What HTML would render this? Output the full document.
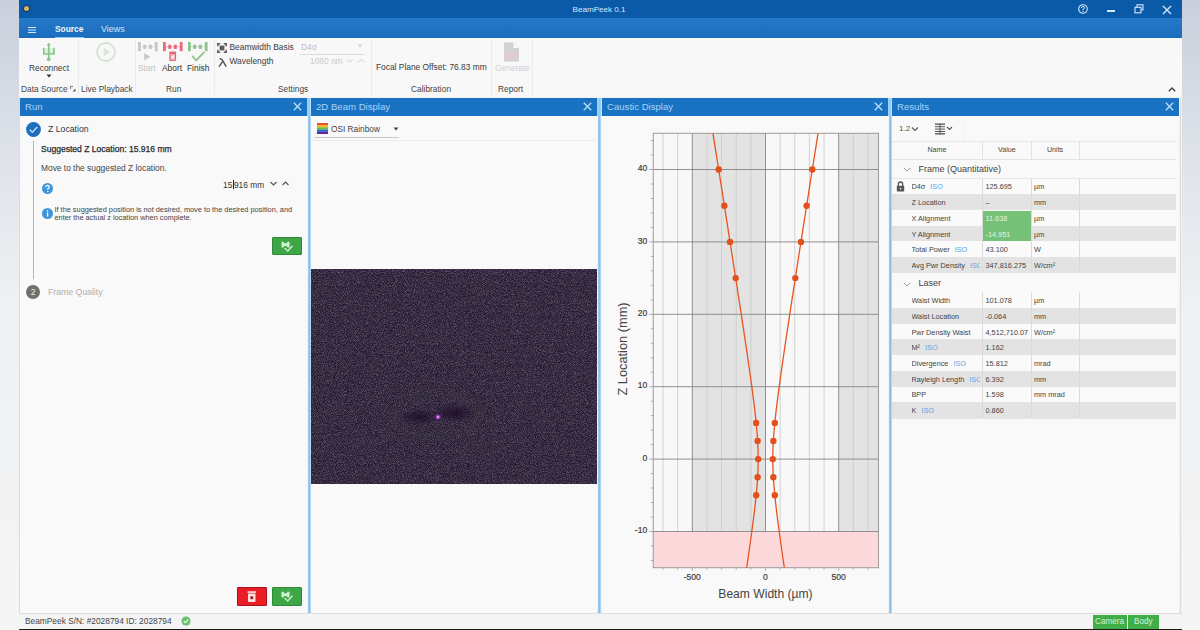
<!DOCTYPE html>
<html><head><meta charset="utf-8">
<style>
*{margin:0;padding:0;box-sizing:border-box}
html,body{width:1200px;height:630px;overflow:hidden}
body{position:relative;font-family:"Liberation Sans",sans-serif;background:linear-gradient(#c9d0dc 0%,#e3e6ec 30%,#eef0f2 48%,#f5f5f5 100%);color:#333}
.a{position:absolute}
.t{position:absolute;white-space:nowrap;line-height:1}
.rl{font-size:8.4px;color:#444}
.sep{position:absolute;top:40px;width:1px;height:55px;background:#ebebeb}
.ph{position:absolute;top:98px;height:18px;background:#1a72c3}
.ph .ttl{position:absolute;left:5px;top:4.2px;line-height:1;font-size:9.6px;color:#a9d3f7;white-space:nowrap}
.ph svg{position:absolute;right:5px;top:4px}
.pb{position:absolute;top:116px;height:497px;background:#f9f9f9}
.split{position:absolute;top:98px;width:3px;height:515px;background:linear-gradient(90deg,#a4cdef,#86bce6 60%,#cfe9fa)}
</style></head><body>
<!-- app frame -->
<div class="a" style="left:19px;top:0;width:1163px;height:630px;background:#f7f7f7"></div>
<!-- title bar -->
<div class="a" style="left:19px;top:0;width:1163px;height:18px;background:#0b5aa8"></div>
<div class="a" style="left:23.5px;top:6.4px;width:5px;height:5px;border-radius:50%;background:#d8b45a;box-shadow:0 0 0 1px #1e2e78"></div>
<div class="t" style="left:572.5px;top:6px;font-size:8.1px;color:#d4e8fb">BeamPeek 0.1</div>
<!-- title buttons -->
<svg class="a" style="left:1076px;top:3px" width="14" height="12" viewBox="0 0 14 12"><circle cx="7" cy="6" r="4.3" fill="none" stroke="#d4e8fb" stroke-width="1.1"/><path d="M5.4 4.9 Q5.5 3.5 7 3.5 Q8.6 3.5 8.5 4.9 Q8.4 5.8 7.1 6.3 L7.1 7.2" fill="none" stroke="#d4e8fb" stroke-width="1"/><circle cx="7.1" cy="8.4" r="0.6" fill="#d4e8fb"/></svg>
<div class="a" style="left:1107px;top:10px;width:8px;height:1.6px;background:#d4e8fb"></div>
<svg class="a" style="left:1134px;top:4px" width="10" height="10" viewBox="0 0 10 10"><rect x="3" y="0.8" width="6" height="5" fill="none" stroke="#d4e8fb" stroke-width="1.1"/><rect x="1" y="3.3" width="6" height="5.5" fill="#0b5aa8" stroke="#d4e8fb" stroke-width="1.1"/></svg>
<svg class="a" style="left:1162px;top:4.5px" width="10" height="10" viewBox="0 0 10 10"><path d="M1 1 L9 9 M9 1 L1 9" stroke="#d4e8fb" stroke-width="1.4"/></svg>
<!-- tab bar -->
<div class="a" style="left:19px;top:18px;width:1163px;height:20px;background:linear-gradient(#2479c9,#1b6dbc)"></div>
<div class="a" style="left:28px;top:27px;width:8px;height:1.2px;background:#d4e8fb;box-shadow:0 2.5px 0 #d4e8fb,0 5px 0 #d4e8fb"></div>
<div class="t" style="left:55px;top:25px;font-size:8.4px;font-weight:bold;color:#eef6fd">Source</div>
<div class="a" style="left:55px;top:36.8px;width:29px;height:1.2px;background:#8fc8f2"></div>
<div class="t" style="left:101px;top:25px;font-size:9px;color:#cfe6fb">Views</div>
<!-- ribbon -->
<div class="a" style="left:19px;top:38px;width:1163px;height:59px;background:#f8f8f8"></div>
<div class="sep" style="left:78px"></div>
<div class="sep" style="left:135px"></div>
<div class="sep" style="left:214px"></div>
<div class="sep" style="left:371px"></div>
<div class="sep" style="left:491px"></div>
<div class="sep" style="left:532px"></div>

<!-- ribbon content -->
<svg class="a" style="left:42px;top:42px" width="15" height="20" viewBox="0 0 15 20">
 <rect x="1.8" y="6" width="10.2" height="6" fill="#dcf3dc"/>
 <g fill="none" stroke="#8ac38e" stroke-width="1.7">
  <path d="M6.7 2.5 V16"/>
  <path d="M1.8 5.8 V12 H12 V5.8"/>
 </g>
 <path d="M6.7 0.6 L8.9 3.4 H4.5 Z" fill="#8ac38e"/>
 <circle cx="6.7" cy="17.3" r="1.9" fill="#8ac38e"/>
</svg>
<div class="t rl" style="left:29px;top:64px;color:#3a3a3a">Reconnect</div>
<svg class="a" style="left:46px;top:74px" width="6" height="4" viewBox="0 0 6 4"><path d="M0.5 0.5 H5.5 L3 3.5Z" fill="#333"/></svg>
<div class="t rl" style="left:21px;top:85px">Data Source</div>
<svg class="a" style="left:70px;top:86px" width="6" height="6" viewBox="0 0 6 6"><path d="M0.5 0.5 H3 M0.5 0.5 V3" stroke="#666" stroke-width="0.9" fill="none"/><path d="M5.5 5.5 H2.5 L5.5 2.5Z" fill="#555"/></svg>

<svg class="a" style="left:95px;top:41px" width="22" height="22" viewBox="0 0 22 22"><circle cx="11" cy="11" r="9" fill="none" stroke="#d5e3d5" stroke-width="1.9"/><path d="M8.8 6.8 L15 11 L8.8 15.2Z" fill="#dbe5db"/></svg>
<div class="t rl" style="left:81px;top:85px">Live Playback</div>

<svg class="a" style="left:138px;top:42.3px" width="22" height="21" viewBox="0 0 22 21"><g fill="#c6c6c6"><rect x="0" y="0" width="2.8" height="9.2"/><rect x="16.8" y="0" width="2.8" height="9.2"/><rect x="5.3" y="2.7" width="2.9" height="4.2"/><rect x="10.9" y="2.7" width="2.9" height="4.2"/></g><path d="M2.8 4.8 H16.8" stroke="#c6c6c6" stroke-width="0.9" opacity="0.55"/><path d="M6.1 10.9 L12.4 14.65 L6.1 18.4Z" fill="#c8c8c8"/></svg>
<div class="t rl" style="left:138px;top:64px;color:#c4c4c4">Start</div>
<svg class="a" style="left:162.9px;top:42.3px" width="22" height="21" viewBox="0 0 22 21"><g fill="#e66a7a"><rect x="0" y="0" width="2.8" height="9.2"/><rect x="16.8" y="0" width="2.8" height="9.2"/><rect x="5.3" y="2.7" width="2.9" height="4.2"/><rect x="10.9" y="2.7" width="2.9" height="4.2"/></g><path d="M2.8 4.8 H16.8" stroke="#e66a7a" stroke-width="0.9" opacity="0.55"/>
 <rect x="6.3" y="9.5" width="6.8" height="9.6" rx="1" fill="#e46a7a"/><rect x="7.6" y="12.2" width="4.2" height="5.6" fill="#f6c2ca"/><rect x="8.8" y="14" width="1.8" height="1.8" fill="#fff"/>
</svg>
<div class="t rl" style="left:162px;top:64px;color:#333">Abort</div>
<svg class="a" style="left:188px;top:42.3px" width="22" height="21" viewBox="0 0 22 21"><g fill="#8cc48d"><rect x="0" y="0" width="2.8" height="9.2"/><rect x="16.8" y="0" width="2.8" height="9.2"/><rect x="5.3" y="2.7" width="2.9" height="4.2"/><rect x="10.9" y="2.7" width="2.9" height="4.2"/></g><path d="M2.8 4.8 H16.8" stroke="#8cc48d" stroke-width="0.9" opacity="0.55"/><path d="M4 13.7 L8.2 18.4 L16.4 9.9" fill="none" stroke="#8cc48d" stroke-width="1.7"/></svg>
<div class="t rl" style="left:187px;top:64px;color:#333">Finish</div>
<div class="t rl" style="left:166px;top:85px">Run</div>

<svg class="a" style="left:217.3px;top:42.7px" width="10" height="10" viewBox="0 0 10 10">
 <g fill="none" stroke="#5a5a5a" stroke-width="1.5"><path d="M0.8 3.2 V0.8 H3.2 M6.8 0.8 H9.2 V3.2 M9.2 6.8 V9.2 H6.8 M3.2 9.2 H0.8 V6.8"/></g>
 <rect x="2.6" y="2.6" width="4.8" height="4.8" fill="#5a5a5a"/>
</svg>
<div class="t rl" style="left:229.5px;top:43px;color:#3a3a3a">Beamwidth Basis</div>
<div class="t rl" style="left:301px;top:43px;color:#bdbdbd">D4σ</div>
<div class="a" style="left:300px;top:53.5px;width:64px;height:1px;background:#dcdcdc"></div>
<svg class="a" style="left:357px;top:44px" width="6" height="4" viewBox="0 0 6 4"><path d="M0.5 0.5 H5.5 L3 3.5Z" fill="#cfcfcf"/></svg>
<svg class="a" style="left:218px;top:57.5px" width="9" height="9" viewBox="0 0 9 9"><path d="M1.6 0.8 Q4 0.6 5 3 L8.2 8.6 M4.6 3.6 L1 8.6" fill="none" stroke="#555" stroke-width="1.5"/></svg>
<div class="t rl" style="left:229.5px;top:57px;color:#3a3a3a">Wavelength</div>
<div class="t rl" style="left:310px;top:57px;color:#c8c8c8">1080 nm</div>
<svg class="a" style="left:346px;top:58px" width="20" height="6" viewBox="0 0 20 6"><path d="M1 1.5 L3.8 4.3 L6.6 1.5 M12.5 4.3 L15.3 1.5 L18.1 4.3" fill="none" stroke="#d0d0d0" stroke-width="1"/></svg>
<div class="t rl" style="left:278px;top:85px">Settings</div>

<div class="t rl" style="left:376px;top:63px;color:#3a3a3a">Focal Plane Offset: 76.83 mm</div>
<div class="t rl" style="left:411px;top:85px">Calibration</div>

<svg class="a" style="left:503px;top:42px" width="17" height="20" viewBox="0 0 17 20">
 <path d="M1 0.5 H10.5 L16 6 V19.5 H1Z" fill="#d2d2d2"/>
 <path d="M10.5 0.8 V6 H15.7Z" fill="#fafafa"/>
 <rect x="3" y="10" width="10" height="7" fill="#e3cbd0" opacity="0.8"/>
</svg>
<div class="t rl" style="left:495px;top:64px;color:#d0d0d0">Generate</div>
<div class="t rl" style="left:498px;top:85px">Report</div>
<svg class="a" style="left:1168px;top:87px" width="8" height="5" viewBox="0 0 8 5"><path d="M0.8 4.2 L4 1 L7.2 4.2" fill="none" stroke="#444" stroke-width="1.4"/></svg>

<!-- panel area -->
<div class="a" style="left:19px;top:97px;width:1163px;height:517px;background:#f2f2f2"></div>
<div class="a" style="left:19px;top:97px;width:1px;height:517px;background:#dcdcdc"></div>
<div class="a" style="left:1180px;top:97px;width:1px;height:517px;background:#dcdcdc"></div>
<div class="a" style="left:19px;top:612px;width:1163px;height:2px;background:#dedede"></div>
<div class="ph" style="left:20px;width:287px"><div class="ttl">Run</div><svg width="9" height="9" viewBox="0 0 9 9"><path d="M0.8 0.8 L8.2 8.2 M8.2 0.8 L0.8 8.2" stroke="#b3d9f9" stroke-width="1.4"/></svg></div>
<div class="pb" style="left:20px;width:287px"></div>
<div class="a" style="left:307px;top:98px;width:4px;height:18px;background:linear-gradient(90deg,#a6d2f4,#8ccaf2 60%,#cfeafc)"></div><div class="split" style="left:308px;top:116px;width:3px;height:497px"></div>
<div class="ph" style="left:311px;width:286px"><div class="ttl">2D Beam Display</div><svg width="9" height="9" viewBox="0 0 9 9"><path d="M0.8 0.8 L8.2 8.2 M8.2 0.8 L0.8 8.2" stroke="#b3d9f9" stroke-width="1.4"/></svg></div>
<div class="pb" style="left:311px;width:286px"></div>
<div class="a" style="left:597px;top:98px;width:5px;height:18px;background:linear-gradient(90deg,#a6d2f4,#8ccaf2 60%,#cfeafc)"></div><div class="split" style="left:598px;top:116px;width:3.2px;height:497px"></div>
<div class="ph" style="left:602px;width:286px"><div class="ttl">Caustic Display</div><svg width="9" height="9" viewBox="0 0 9 9"><path d="M0.8 0.8 L8.2 8.2 M8.2 0.8 L0.8 8.2" stroke="#b3d9f9" stroke-width="1.4"/></svg></div>
<div class="pb" style="left:602px;width:286px"></div>
<div class="a" style="left:888px;top:98px;width:4px;height:18px;background:linear-gradient(90deg,#a6d2f4,#8ccaf2 60%,#cfeafc)"></div><div class="split" style="left:888.5px;top:116px;width:3.2px;height:497px"></div>
<div class="ph" style="left:892px;width:287px"><div class="ttl">Results</div><svg width="9" height="9" viewBox="0 0 9 9"><path d="M0.8 0.8 L8.2 8.2 M8.2 0.8 L0.8 8.2" stroke="#b3d9f9" stroke-width="1.4"/></svg></div>
<div class="pb" style="left:892px;width:287px"></div>

<!-- Run panel content -->
<svg class="a" style="left:25px;top:121px" width="17" height="17" viewBox="0 0 17 17"><circle cx="8.5" cy="8.5" r="7.4" fill="#1d6fbd"/><path d="M4.8 8.7 L7.4 11.2 L12.2 6" fill="none" stroke="#b8ddfb" stroke-width="1.5"/></svg>
<div class="t" style="left:48px;top:125px;font-size:8.7px;color:#333">Z Location</div>
<div class="a" style="left:33.2px;top:141px;width:1.3px;height:138px;background:#9dbcd9"></div>
<div class="t" style="left:41px;top:145px;font-size:8.55px;color:#2a2a2a;-webkit-text-stroke:0.25px #2a2a2a">Suggested Z Location: 15.916 mm</div>
<div class="t" style="left:41px;top:164px;font-size:8.4px;color:#444">Move to the suggested Z location.</div>
<svg class="a" style="left:40.5px;top:182px" width="13" height="13" viewBox="0 0 13 13"><circle cx="6.5" cy="6.5" r="5.5" fill="#3d95de"/><path d="M4.7 5.2 Q4.8 3.4 6.5 3.4 Q8.3 3.4 8.3 5 Q8.3 6 6.8 6.7 L6.8 7.7" fill="none" stroke="#fff" stroke-width="1.2"/><circle cx="6.8" cy="9.4" r="0.75" fill="#fff"/></svg>
<div class="t" style="left:223px;top:180px;font-size:8.4px;color:#333">15<span style="display:inline-block;width:1px;height:9px;background:#222;vertical-align:-1px;margin:0 0.3px"></span>916 mm</div>
<svg class="a" style="left:269px;top:180px" width="22" height="7" viewBox="0 0 22 7"><path d="M1.5 2 L4.5 5 L7.5 2 M13.5 5 L16.5 2 L19.5 5" fill="none" stroke="#555" stroke-width="1.1"/></svg>
<svg class="a" style="left:40.5px;top:206.5px" width="13" height="13" viewBox="0 0 13 13"><circle cx="6.5" cy="6.5" r="5.5" fill="#3d95de"/><rect x="5.9" y="5.3" width="1.3" height="4.3" fill="#fff"/><circle cx="6.55" cy="3.7" r="0.8" fill="#fff"/></svg>
<div class="t" style="left:54.5px;top:205.5px;font-size:7.35px;color:#444;line-height:8.3px">If the suggested position is not desired, move to the desired position, and<br>enter the actual z location when complete.</div>
<div class="a" style="left:272px;top:237px;width:30px;height:18px;background:#3fa648;border:1px solid #2f8a37;border-radius:1px"></div>
<svg class="a" style="left:272px;top:236.5px" width="30" height="18" viewBox="0 0 30 18"><path d="M9.5 4.8 H11.3 L12.4 6.3 H14.6 L15.7 4.8 H17.5 V10.5 H15.7 L14.6 9 H12.4 L11.3 10.5 H9.5 Z" fill="#d2f3d2"/><path d="M12.6 11 L15.8 14 L20.5 8.8" fill="none" stroke="#c8efc8" stroke-width="1.5"/></svg>
<svg class="a" style="left:25px;top:284px" width="16" height="16" viewBox="0 0 16 16"><circle cx="8" cy="8" r="7" fill="#6f6f6f"/><text x="8" y="11" font-size="8.5" text-anchor="middle" fill="#eee" font-family="Liberation Sans">2</text></svg>
<div class="t" style="left:48px;top:287.5px;font-size:8.7px;color:#b0b0b0">Frame Quality</div>
<div class="a" style="left:237px;top:587px;width:30px;height:19px;background:#e81d25;border:1px solid #a8121a;border-radius:1px"></div>
<svg class="a" style="left:237px;top:587px" width="30" height="19" viewBox="0 0 30 19"><rect x="10.5" y="4.3" width="8.5" height="1.6" fill="#ffe4e4"/><rect x="11" y="6.6" width="7.5" height="8.4" rx="1" fill="#ffe4e4"/><rect x="13.3" y="9.3" width="2.9" height="2.9" fill="#b01820"/></svg>
<div class="a" style="left:272px;top:587px;width:30px;height:19px;background:#3fa648;border:1px solid #2f8a37;border-radius:1px"></div>
<svg class="a" style="left:272px;top:587px" width="30" height="18" viewBox="0 0 30 18"><path d="M9.5 4.8 H11.3 L12.4 6.3 H14.6 L15.7 4.8 H17.5 V10.5 H15.7 L14.6 9 H12.4 L11.3 10.5 H9.5 Z" fill="#d2f3d2"/><path d="M12.6 11 L15.8 14 L20.5 8.8" fill="none" stroke="#c8efc8" stroke-width="1.5"/></svg>

<!-- status bar -->
<div class="a" style="left:19px;top:614px;width:1163px;height:15px;background:#f4f4f4"></div>
<div class="a" style="left:19px;top:629px;width:1163px;height:1px;background:#1a1a1a"></div>
<div class="t" style="left:25px;top:617px;font-size:8.35px;color:#444">BeamPeek S/N: #2028794 ID: 2028794</div>
<svg class="a" style="left:181px;top:616px" width="10" height="10" viewBox="0 0 10 10"><circle cx="5" cy="5" r="4.6" fill="#6cc06f"/><path d="M2.8 5.1 L4.4 6.6 L7.3 3.5" fill="none" stroke="#e8f7e8" stroke-width="1.2"/></svg>
<div class="a" style="left:1093px;top:615px;width:34px;height:14px;background:#3fae49"></div>
<div class="a" style="left:1128px;top:615px;width:31px;height:14px;background:#3fae49"></div>
<div class="t" style="left:1095px;top:618px;font-size:8.2px;color:#d8f0d8">Camera</div>
<div class="t" style="left:1134px;top:618px;font-size:8.2px;color:#d8f0d8">Body</div>

<!-- 2D beam display -->
<svg class="a" style="left:317px;top:123px" width="11" height="11" viewBox="0 0 11 11"><rect y="0" width="11" height="2.2" fill="#e8542a"/><rect y="2.2" width="11" height="2.2" fill="#f2b418"/><rect y="4.4" width="11" height="2.2" fill="#5cc23c"/><rect y="6.6" width="11" height="2.2" fill="#2a62d6"/><rect y="8.8" width="11" height="2.2" fill="#5a2a9a"/></svg>
<div class="t" style="left:331px;top:125px;font-size:8.3px;color:#444">OSI Rainbow</div>
<svg class="a" style="left:393px;top:127px" width="6" height="4" viewBox="0 0 6 4"><path d="M0.5 0.5 H5.5 L3 3.5Z" fill="#444"/></svg>
<div class="a" style="left:314px;top:137px;width:85px;height:1px;background:#c9c9c9"></div>
<div class="a" style="left:311px;top:140px;width:286px;height:1px;background:#ececec"></div>
<svg class="a" style="left:311px;top:269px" width="286" height="215" viewBox="0 0 286 215">
 <defs>
  <filter id="nz" x="0" y="0" width="100%" height="100%">
   <feTurbulence type="fractalNoise" baseFrequency="1.1" numOctaves="2" seed="7" result="t"/>
   <feColorMatrix type="matrix" values="0 0 0 0 0.31  0 0 0 0 0.28  0 0 0 0 0.31  1.2 0 0 0 -0.45" in="t" result="c"/>
   <feGaussianBlur in="c" stdDeviation="0.45" result="b"/><feComposite in="b" in2="SourceGraphic" operator="in"/>
  </filter>
  <radialGradient id="dk" cx="0.5" cy="0.5" r="0.5"><stop offset="0" stop-color="#1a0826" stop-opacity="0.8"/><stop offset="1" stop-color="#1a0826" stop-opacity="0"/></radialGradient>
  <radialGradient id="sp" cx="0.5" cy="0.5" r="0.5"><stop offset="0" stop-color="#ffd8ff"/><stop offset="0.35" stop-color="#d050e0"/><stop offset="1" stop-color="#7020a0" stop-opacity="0"/></radialGradient>
 </defs>
 <rect width="287" height="215" fill="#261a33"/>
 <rect width="287" height="215" fill="#000" filter="url(#nz)"/>
 <filter id="bl"><feGaussianBlur stdDeviation="3"/></filter><ellipse cx="127" cy="146" rx="42" ry="22" fill="none" stroke="#3c4438" stroke-width="5" opacity="0.28" filter="url(#bl)"/><ellipse cx="108" cy="148" rx="20" ry="9" fill="url(#dk)"/>
 <ellipse cx="143" cy="144" rx="22" ry="10" fill="url(#dk)"/>
 <circle cx="127" cy="148" r="3.4" fill="url(#sp)"/>
</svg>

<!-- caustic -->
<svg class="a" style="left:0;top:0" width="1200" height="630" viewBox="0 0 1200 630" font-family="Liberation Sans"><rect x="653.25" y="133.30" width="225.25" height="434.40" fill="#f8f8f8"/><rect x="692.30" y="133.30" width="73.20" height="398.20" fill="#e3e3e3"/><rect x="838.70" y="133.30" width="39.80" height="398.20" fill="#e3e3e3"/><rect x="653.25" y="531.50" width="225.25" height="36.20" fill="#fdd9dc"/><line x1="663.02" y1="133.30" x2="663.02" y2="531.50" stroke="#cdcdcd" stroke-width="0.9"/><line x1="677.66" y1="133.30" x2="677.66" y2="531.50" stroke="#cdcdcd" stroke-width="0.9"/><line x1="706.94" y1="133.30" x2="706.94" y2="531.50" stroke="#cdcdcd" stroke-width="0.9"/><line x1="721.58" y1="133.30" x2="721.58" y2="531.50" stroke="#cdcdcd" stroke-width="0.9"/><line x1="736.22" y1="133.30" x2="736.22" y2="531.50" stroke="#cdcdcd" stroke-width="0.9"/><line x1="750.86" y1="133.30" x2="750.86" y2="531.50" stroke="#cdcdcd" stroke-width="0.9"/><line x1="780.14" y1="133.30" x2="780.14" y2="531.50" stroke="#cdcdcd" stroke-width="0.9"/><line x1="794.78" y1="133.30" x2="794.78" y2="531.50" stroke="#cdcdcd" stroke-width="0.9"/><line x1="809.42" y1="133.30" x2="809.42" y2="531.50" stroke="#cdcdcd" stroke-width="0.9"/><line x1="824.06" y1="133.30" x2="824.06" y2="531.50" stroke="#cdcdcd" stroke-width="0.9"/><line x1="853.34" y1="133.30" x2="853.34" y2="531.50" stroke="#cdcdcd" stroke-width="0.9"/><line x1="867.98" y1="133.30" x2="867.98" y2="531.50" stroke="#cdcdcd" stroke-width="0.9"/><line x1="692.30" y1="133.30" x2="692.30" y2="531.50" stroke="#858585" stroke-width="0.9"/><line x1="765.50" y1="133.30" x2="765.50" y2="531.50" stroke="#858585" stroke-width="0.9"/><line x1="838.70" y1="133.30" x2="838.70" y2="531.50" stroke="#858585" stroke-width="0.9"/><line x1="653.25" y1="531.50" x2="878.5" y2="531.50" stroke="#858585" stroke-width="0.9"/><line x1="653.25" y1="459.10" x2="878.5" y2="459.10" stroke="#858585" stroke-width="0.9"/><line x1="653.25" y1="386.70" x2="878.5" y2="386.70" stroke="#858585" stroke-width="0.9"/><line x1="653.25" y1="314.30" x2="878.5" y2="314.30" stroke="#858585" stroke-width="0.9"/><line x1="653.25" y1="241.90" x2="878.5" y2="241.90" stroke="#858585" stroke-width="0.9"/><line x1="653.25" y1="169.50" x2="878.5" y2="169.50" stroke="#858585" stroke-width="0.9"/><rect x="653.25" y="133.30" width="225.25" height="434.40" fill="none" stroke="#9a9a9a" stroke-width="1"/><line x1="650.75" y1="560.46" x2="653.25" y2="560.46" stroke="#9a9a9a" stroke-width="0.8"/><line x1="650.75" y1="545.98" x2="653.25" y2="545.98" stroke="#9a9a9a" stroke-width="0.8"/><line x1="649.25" y1="531.50" x2="653.25" y2="531.50" stroke="#9a9a9a" stroke-width="0.8"/><line x1="650.75" y1="517.02" x2="653.25" y2="517.02" stroke="#9a9a9a" stroke-width="0.8"/><line x1="650.75" y1="502.54" x2="653.25" y2="502.54" stroke="#9a9a9a" stroke-width="0.8"/><line x1="650.75" y1="488.06" x2="653.25" y2="488.06" stroke="#9a9a9a" stroke-width="0.8"/><line x1="650.75" y1="473.58" x2="653.25" y2="473.58" stroke="#9a9a9a" stroke-width="0.8"/><line x1="649.25" y1="459.10" x2="653.25" y2="459.10" stroke="#9a9a9a" stroke-width="0.8"/><line x1="650.75" y1="444.62" x2="653.25" y2="444.62" stroke="#9a9a9a" stroke-width="0.8"/><line x1="650.75" y1="430.14" x2="653.25" y2="430.14" stroke="#9a9a9a" stroke-width="0.8"/><line x1="650.75" y1="415.66" x2="653.25" y2="415.66" stroke="#9a9a9a" stroke-width="0.8"/><line x1="650.75" y1="401.18" x2="653.25" y2="401.18" stroke="#9a9a9a" stroke-width="0.8"/><line x1="649.25" y1="386.70" x2="653.25" y2="386.70" stroke="#9a9a9a" stroke-width="0.8"/><line x1="650.75" y1="372.22" x2="653.25" y2="372.22" stroke="#9a9a9a" stroke-width="0.8"/><line x1="650.75" y1="357.74" x2="653.25" y2="357.74" stroke="#9a9a9a" stroke-width="0.8"/><line x1="650.75" y1="343.26" x2="653.25" y2="343.26" stroke="#9a9a9a" stroke-width="0.8"/><line x1="650.75" y1="328.78" x2="653.25" y2="328.78" stroke="#9a9a9a" stroke-width="0.8"/><line x1="649.25" y1="314.30" x2="653.25" y2="314.30" stroke="#9a9a9a" stroke-width="0.8"/><line x1="650.75" y1="299.82" x2="653.25" y2="299.82" stroke="#9a9a9a" stroke-width="0.8"/><line x1="650.75" y1="285.34" x2="653.25" y2="285.34" stroke="#9a9a9a" stroke-width="0.8"/><line x1="650.75" y1="270.86" x2="653.25" y2="270.86" stroke="#9a9a9a" stroke-width="0.8"/><line x1="650.75" y1="256.38" x2="653.25" y2="256.38" stroke="#9a9a9a" stroke-width="0.8"/><line x1="649.25" y1="241.90" x2="653.25" y2="241.90" stroke="#9a9a9a" stroke-width="0.8"/><line x1="650.75" y1="227.42" x2="653.25" y2="227.42" stroke="#9a9a9a" stroke-width="0.8"/><line x1="650.75" y1="212.94" x2="653.25" y2="212.94" stroke="#9a9a9a" stroke-width="0.8"/><line x1="650.75" y1="198.46" x2="653.25" y2="198.46" stroke="#9a9a9a" stroke-width="0.8"/><line x1="650.75" y1="183.98" x2="653.25" y2="183.98" stroke="#9a9a9a" stroke-width="0.8"/><line x1="649.25" y1="169.50" x2="653.25" y2="169.50" stroke="#9a9a9a" stroke-width="0.8"/><line x1="650.75" y1="155.02" x2="653.25" y2="155.02" stroke="#9a9a9a" stroke-width="0.8"/><line x1="650.75" y1="140.54" x2="653.25" y2="140.54" stroke="#9a9a9a" stroke-width="0.8"/><line x1="663.02" y1="567.70" x2="663.02" y2="569.70" stroke="#9a9a9a" stroke-width="0.8"/><line x1="677.66" y1="567.70" x2="677.66" y2="569.70" stroke="#9a9a9a" stroke-width="0.8"/><line x1="692.30" y1="567.70" x2="692.30" y2="570.70" stroke="#9a9a9a" stroke-width="0.8"/><line x1="706.94" y1="567.70" x2="706.94" y2="569.70" stroke="#9a9a9a" stroke-width="0.8"/><line x1="721.58" y1="567.70" x2="721.58" y2="569.70" stroke="#9a9a9a" stroke-width="0.8"/><line x1="736.22" y1="567.70" x2="736.22" y2="569.70" stroke="#9a9a9a" stroke-width="0.8"/><line x1="750.86" y1="567.70" x2="750.86" y2="569.70" stroke="#9a9a9a" stroke-width="0.8"/><line x1="765.50" y1="567.70" x2="765.50" y2="570.70" stroke="#9a9a9a" stroke-width="0.8"/><line x1="780.14" y1="567.70" x2="780.14" y2="569.70" stroke="#9a9a9a" stroke-width="0.8"/><line x1="794.78" y1="567.70" x2="794.78" y2="569.70" stroke="#9a9a9a" stroke-width="0.8"/><line x1="809.42" y1="567.70" x2="809.42" y2="569.70" stroke="#9a9a9a" stroke-width="0.8"/><line x1="824.06" y1="567.70" x2="824.06" y2="569.70" stroke="#9a9a9a" stroke-width="0.8"/><line x1="838.70" y1="567.70" x2="838.70" y2="570.70" stroke="#9a9a9a" stroke-width="0.8"/><line x1="853.34" y1="567.70" x2="853.34" y2="569.70" stroke="#9a9a9a" stroke-width="0.8"/><line x1="867.98" y1="567.70" x2="867.98" y2="569.70" stroke="#9a9a9a" stroke-width="0.8"/><text x="647.25" y="533.10" text-anchor="end" font-size="8.6" fill="#3e3e3e" stroke="#3e3e3e" stroke-width="0.2">-10</text><text x="647.25" y="460.70" text-anchor="end" font-size="8.6" fill="#3e3e3e" stroke="#3e3e3e" stroke-width="0.2">0</text><text x="647.25" y="388.30" text-anchor="end" font-size="8.6" fill="#3e3e3e" stroke="#3e3e3e" stroke-width="0.2">10</text><text x="647.25" y="315.90" text-anchor="end" font-size="8.6" fill="#3e3e3e" stroke="#3e3e3e" stroke-width="0.2">20</text><text x="647.25" y="243.50" text-anchor="end" font-size="8.6" fill="#3e3e3e" stroke="#3e3e3e" stroke-width="0.2">30</text><text x="647.25" y="171.10" text-anchor="end" font-size="8.6" fill="#3e3e3e" stroke="#3e3e3e" stroke-width="0.2">40</text><text x="692.30" y="580.20" text-anchor="middle" font-size="8.6" fill="#3e3e3e" stroke="#3e3e3e" stroke-width="0.2">-500</text><text x="765.50" y="580.20" text-anchor="middle" font-size="8.6" fill="#3e3e3e" stroke="#3e3e3e" stroke-width="0.2">0</text><text x="838.70" y="580.20" text-anchor="middle" font-size="8.6" fill="#3e3e3e" stroke="#3e3e3e" stroke-width="0.2">500</text><text x="765.50" y="597.5" text-anchor="middle" font-size="12.1" fill="#444">Beam Width (µm)</text><text transform="translate(626.5,349) rotate(-90)" text-anchor="middle" font-size="12.8" fill="#444">Z Location (mm)</text><polyline points="746.67,567.70 747.20,564.08 747.73,560.46 748.26,556.84 748.78,553.22 749.30,549.60 749.81,545.98 750.32,542.36 750.82,538.74 751.32,535.12 751.81,531.50 752.30,527.88 752.78,524.26 753.24,520.64 753.70,517.02 754.15,513.40 754.59,509.78 755.01,506.16 755.41,502.54 755.80,498.92 756.17,495.30 756.52,491.68 756.84,488.06 757.14,484.44 757.40,480.82 757.63,477.20 757.82,473.58 757.98,469.96 758.09,466.34 758.16,462.72 758.18,459.10 758.16,455.48 758.09,451.86 757.98,448.24 757.82,444.62 757.63,441.00 757.40,437.38 757.14,433.76 756.84,430.14 756.52,426.52 756.17,422.90 755.80,419.28 755.41,415.66 755.01,412.04 754.59,408.42 754.15,404.80 753.70,401.18 753.24,397.56 752.78,393.94 752.30,390.32 751.81,386.70 751.32,383.08 750.82,379.46 750.32,375.84 749.81,372.22 749.30,368.60 748.78,364.98 748.26,361.36 747.73,357.74 747.20,354.12 746.67,350.50 746.14,346.88 745.60,343.26 745.06,339.64 744.52,336.02 743.98,332.40 743.44,328.78 742.89,325.16 742.34,321.54 741.79,317.92 741.24,314.30 740.69,310.68 740.14,307.06 739.58,303.44 739.03,299.82 738.47,296.20 737.91,292.58 737.36,288.96 736.80,285.34 736.24,281.72 735.68,278.10 735.12,274.48 734.56,270.86 733.99,267.24 733.43,263.62 732.87,260.00 732.30,256.38 731.74,252.76 731.17,249.14 730.61,245.52 730.04,241.90 729.48,238.28 728.91,234.66 728.35,231.04 727.78,227.42 727.21,223.80 726.64,220.18 726.08,216.56 725.51,212.94 724.94,209.32 724.37,205.70 723.80,202.08 723.23,198.46 722.66,194.84 722.09,191.22 721.52,187.60 720.95,183.98 720.38,180.36 719.81,176.74 719.24,173.12 718.67,169.50 718.10,165.88 717.53,162.26 716.95,158.64 716.38,155.02 715.81,151.40 715.24,147.78 714.67,144.16 714.09,140.54 713.52,136.92 712.95,133.30" fill="none" stroke="#e8531f" stroke-width="1.3"/><polyline points="784.33,567.70 783.80,564.08 783.27,560.46 782.74,556.84 782.22,553.22 781.70,549.60 781.19,545.98 780.68,542.36 780.18,538.74 779.68,535.12 779.19,531.50 778.70,527.88 778.22,524.26 777.76,520.64 777.30,517.02 776.85,513.40 776.41,509.78 775.99,506.16 775.59,502.54 775.20,498.92 774.83,495.30 774.48,491.68 774.16,488.06 773.86,484.44 773.60,480.82 773.37,477.20 773.18,473.58 773.02,469.96 772.91,466.34 772.84,462.72 772.82,459.10 772.84,455.48 772.91,451.86 773.02,448.24 773.18,444.62 773.37,441.00 773.60,437.38 773.86,433.76 774.16,430.14 774.48,426.52 774.83,422.90 775.20,419.28 775.59,415.66 775.99,412.04 776.41,408.42 776.85,404.80 777.30,401.18 777.76,397.56 778.22,393.94 778.70,390.32 779.19,386.70 779.68,383.08 780.18,379.46 780.68,375.84 781.19,372.22 781.70,368.60 782.22,364.98 782.74,361.36 783.27,357.74 783.80,354.12 784.33,350.50 784.86,346.88 785.40,343.26 785.94,339.64 786.48,336.02 787.02,332.40 787.56,328.78 788.11,325.16 788.66,321.54 789.21,317.92 789.76,314.30 790.31,310.68 790.86,307.06 791.42,303.44 791.97,299.82 792.53,296.20 793.09,292.58 793.64,288.96 794.20,285.34 794.76,281.72 795.32,278.10 795.88,274.48 796.44,270.86 797.01,267.24 797.57,263.62 798.13,260.00 798.70,256.38 799.26,252.76 799.83,249.14 800.39,245.52 800.96,241.90 801.52,238.28 802.09,234.66 802.65,231.04 803.22,227.42 803.79,223.80 804.36,220.18 804.92,216.56 805.49,212.94 806.06,209.32 806.63,205.70 807.20,202.08 807.77,198.46 808.34,194.84 808.91,191.22 809.48,187.60 810.05,183.98 810.62,180.36 811.19,176.74 811.76,173.12 812.33,169.50 812.90,165.88 813.47,162.26 814.05,158.64 814.62,155.02 815.19,151.40 815.76,147.78 816.33,144.16 816.91,140.54 817.48,136.92 818.05,133.30" fill="none" stroke="#e8531f" stroke-width="1.3"/><circle cx="718.67" cy="169.50" r="3.2" fill="#e2501c"/><circle cx="812.33" cy="169.50" r="3.2" fill="#e2501c"/><circle cx="724.37" cy="205.70" r="3.2" fill="#e2501c"/><circle cx="806.63" cy="205.70" r="3.2" fill="#e2501c"/><circle cx="730.04" cy="241.90" r="3.2" fill="#e2501c"/><circle cx="800.96" cy="241.90" r="3.2" fill="#e2501c"/><circle cx="735.68" cy="278.10" r="3.2" fill="#e2501c"/><circle cx="795.32" cy="278.10" r="3.2" fill="#e2501c"/><circle cx="756.17" cy="422.90" r="3.2" fill="#e2501c"/><circle cx="774.83" cy="422.90" r="3.2" fill="#e2501c"/><circle cx="757.63" cy="441.00" r="3.2" fill="#e2501c"/><circle cx="773.37" cy="441.00" r="3.2" fill="#e2501c"/><circle cx="758.18" cy="459.10" r="3.2" fill="#e2501c"/><circle cx="772.82" cy="459.10" r="3.2" fill="#e2501c"/><circle cx="757.63" cy="477.20" r="3.2" fill="#e2501c"/><circle cx="773.37" cy="477.20" r="3.2" fill="#e2501c"/><circle cx="756.17" cy="495.30" r="3.2" fill="#e2501c"/><circle cx="774.83" cy="495.30" r="3.2" fill="#e2501c"/></svg>

<!-- results -->
<div class="t" style="left:899px;top:124.5px;font-size:8px;color:#555">1.2</div>
<svg class="a" style="left:911px;top:125.5px" width="8" height="6" viewBox="0 0 8 6"><path d="M1 1.5 L4 4.5 L7 1.5" fill="none" stroke="#555" stroke-width="1.1"/></svg>
<svg class="a" style="left:934px;top:122.5px" width="20" height="12" viewBox="0 0 20 12"><g fill="#555"><rect x="1" y="0.5" width="10" height="1.3"/><rect x="1" y="3.2" width="10" height="1"/><rect x="1" y="5.6" width="10" height="1"/><rect x="1" y="8" width="10" height="1"/><rect x="1" y="10.2" width="10" height="1.3"/><rect x="5.5" y="0.5" width="1" height="11"/></g><path d="M13 4 L15.5 6.5 L18 4" fill="none" stroke="#555" stroke-width="1.1"/></svg>
<div class="a" style="left:963px;top:118px;width:1px;height:22px;background:#f0f0f0"></div>
<div class="a" style="left:892px;top:141px;width:284px;height:1px;background:#e8e8e8"></div>
<div class="a" style="left:892px;top:159px;width:284px;height:1px;background:#e4e4e4"></div>
<div class="t" style="left:927.5px;top:146.5px;font-size:7.1px;color:#444">Name</div>
<div class="t" style="left:998px;top:146.5px;font-size:7.1px;color:#444">Value</div>
<div class="t" style="left:1047px;top:146.5px;font-size:7.1px;color:#444">Units</div>
<div class="a" style="left:982px;top:141px;width:1px;height:18px;background:#e2e2e2"></div>
<div class="a" style="left:1031px;top:141px;width:1px;height:18px;background:#e2e2e2"></div>
<div class="a" style="left:1079px;top:141px;width:1px;height:18px;background:#e2e2e2"></div>
<svg class="a" style="left:903px;top:167px" width="8" height="5" viewBox="0 0 8 5"><path d="M0.8 0.8 L4 4 L7.2 0.8" fill="none" stroke="#999" stroke-width="1"/></svg>
<div class="t" style="left:918.5px;top:164.5px;font-size:9px;color:#444">Frame (Quantitative)</div>
<div class="a" style="left:892px;top:177.5px;width:284px;height:1px;background:#e8e8e8"></div>
<div class="a" style="left:892px;top:178.50px;width:284px;height:15.8px;background:#fafafa"></div>
<div class="t" style="left:911.5px;width:68px;height:11px;overflow:hidden;top:183.40px;font-size:7.3px;color:#444">D4σ<span style="color:#5aa5e6;margin-left:5px">ISO</span></div>
<div class="t" style="left:985.5px;top:183.40px;font-size:7.3px;color:#444">125.695</div>
<div class="t" style="left:1034px;top:183.40px;font-size:7.3px;color:#444">µm</div>
<div class="a" style="left:892px;top:194.20px;width:284px;height:15.8px;background:#e3e3e3"></div>
<div class="t" style="left:911.5px;width:68px;height:11px;overflow:hidden;top:199.10px;font-size:7.3px;color:#444">Z Location</div>
<div class="t" style="left:985.5px;top:199.10px;font-size:7.3px;color:#444">–</div>
<div class="t" style="left:1034px;top:199.10px;font-size:7.3px;color:#444">mm</div>
<div class="a" style="left:892px;top:209.90px;width:284px;height:15.8px;background:#fafafa"></div>
<div class="a" style="left:983px;top:210.50px;width:48px;height:15.7px;background:#76c178"></div>
<div class="t" style="left:911.5px;width:68px;height:11px;overflow:hidden;top:214.80px;font-size:7.3px;color:#444">X Alignment</div>
<div class="t" style="left:985.5px;top:214.80px;font-size:7.3px;color:#e2f3e2">11.638</div>
<div class="t" style="left:1034px;top:214.80px;font-size:7.3px;color:#444">µm</div>
<div class="a" style="left:892px;top:225.60px;width:284px;height:15.8px;background:#e3e3e3"></div>
<div class="a" style="left:983px;top:226.20px;width:48px;height:15.7px;background:#76c178"></div>
<div class="t" style="left:911.5px;width:68px;height:11px;overflow:hidden;top:230.50px;font-size:7.3px;color:#444">Y Alignment</div>
<div class="t" style="left:985.5px;top:230.50px;font-size:7.3px;color:#e2f3e2">-14.951</div>
<div class="t" style="left:1034px;top:230.50px;font-size:7.3px;color:#444">µm</div>
<div class="a" style="left:892px;top:241.30px;width:284px;height:15.8px;background:#fafafa"></div>
<div class="t" style="left:911.5px;width:68px;height:11px;overflow:hidden;top:246.20px;font-size:7.3px;color:#444">Total Power<span style="color:#5aa5e6;margin-left:5px">ISO</span></div>
<div class="t" style="left:985.5px;top:246.20px;font-size:7.3px;color:#444">43.100</div>
<div class="t" style="left:1034px;top:246.20px;font-size:7.3px;color:#444">W</div>
<div class="a" style="left:892px;top:257.00px;width:284px;height:15.8px;background:#e3e3e3"></div>
<div class="t" style="left:911.5px;width:68px;height:11px;overflow:hidden;top:261.90px;font-size:7.3px;color:#444">Avg Pwr Density<span style="color:#5aa5e6;margin-left:5px">ISO</span></div>
<div class="t" style="left:985.5px;top:261.90px;font-size:7.3px;color:#444">347,816.275</div>
<div class="t" style="left:1034px;top:261.90px;font-size:7.3px;color:#444">W/cm²</div>
<div class="a" style="left:982px;top:178.5px;width:1px;height:94.2px;background:#dadada"></div>
<div class="a" style="left:1031px;top:178.5px;width:1px;height:94.2px;background:#dadada"></div>
<div class="a" style="left:1079px;top:178.5px;width:1px;height:94.2px;background:#dadada"></div>
<svg class="a" style="left:896px;top:180.5px" width="9" height="11" viewBox="0 0 9 11"><path d="M2.3 5 V3.2 Q2.3 1 4.5 1 Q6.7 1 6.7 3.2 V5" fill="none" stroke="#555" stroke-width="1.3"/><rect x="0.8" y="4.8" width="7.4" height="5.6" rx="0.6" fill="#555"/><circle cx="4.5" cy="7.6" r="0.9" fill="#ddd"/></svg>
<svg class="a" style="left:903px;top:281.5px" width="8" height="5" viewBox="0 0 8 5"><path d="M0.8 0.8 L4 4 L7.2 0.8" fill="none" stroke="#999" stroke-width="1"/></svg>
<div class="t" style="left:918.5px;top:279.0px;font-size:9px;color:#444">Laser</div>
<div class="a" style="left:892px;top:292.0px;width:284px;height:1px;background:#e8e8e8"></div>
<div class="a" style="left:892px;top:292.30px;width:284px;height:15.8px;background:#fafafa"></div>
<div class="t" style="left:911.5px;width:68px;height:11px;overflow:hidden;top:297.20px;font-size:7.3px;color:#444">Waist Width</div>
<div class="t" style="left:985.5px;top:297.20px;font-size:7.3px;color:#444">101.078</div>
<div class="t" style="left:1034px;top:297.20px;font-size:7.3px;color:#444">µm</div>
<div class="a" style="left:892px;top:308.00px;width:284px;height:15.8px;background:#e3e3e3"></div>
<div class="t" style="left:911.5px;width:68px;height:11px;overflow:hidden;top:312.90px;font-size:7.3px;color:#444">Waist Location</div>
<div class="t" style="left:985.5px;top:312.90px;font-size:7.3px;color:#444">-0.064</div>
<div class="t" style="left:1034px;top:312.90px;font-size:7.3px;color:#444">mm</div>
<div class="a" style="left:892px;top:323.70px;width:284px;height:15.8px;background:#fafafa"></div>
<div class="t" style="left:911.5px;width:68px;height:11px;overflow:hidden;top:328.60px;font-size:7.3px;color:#444">Pwr Density Waist</div>
<div class="t" style="left:985.5px;top:328.60px;font-size:7.3px;color:#444">4,512,710.07</div>
<div class="t" style="left:1034px;top:328.60px;font-size:7.3px;color:#444">W/cm²</div>
<div class="a" style="left:892px;top:339.40px;width:284px;height:15.8px;background:#e3e3e3"></div>
<div class="t" style="left:911.5px;width:68px;height:11px;overflow:hidden;top:344.30px;font-size:7.3px;color:#444">M²<span style="color:#5aa5e6;margin-left:5px">ISO</span></div>
<div class="t" style="left:985.5px;top:344.30px;font-size:7.3px;color:#444">1.162</div>
<div class="t" style="left:1034px;top:344.30px;font-size:7.3px;color:#444"></div>
<div class="a" style="left:892px;top:355.10px;width:284px;height:15.8px;background:#fafafa"></div>
<div class="t" style="left:911.5px;width:68px;height:11px;overflow:hidden;top:360.00px;font-size:7.3px;color:#444">Divergence<span style="color:#5aa5e6;margin-left:5px">ISO</span></div>
<div class="t" style="left:985.5px;top:360.00px;font-size:7.3px;color:#444">15.812</div>
<div class="t" style="left:1034px;top:360.00px;font-size:7.3px;color:#444">mrad</div>
<div class="a" style="left:892px;top:370.80px;width:284px;height:15.8px;background:#e3e3e3"></div>
<div class="t" style="left:911.5px;width:68px;height:11px;overflow:hidden;top:375.70px;font-size:7.3px;color:#444">Rayleigh Length<span style="color:#5aa5e6;margin-left:5px">ISO</span></div>
<div class="t" style="left:985.5px;top:375.70px;font-size:7.3px;color:#444">6.392</div>
<div class="t" style="left:1034px;top:375.70px;font-size:7.3px;color:#444">mm</div>
<div class="a" style="left:892px;top:386.50px;width:284px;height:15.8px;background:#fafafa"></div>
<div class="t" style="left:911.5px;width:68px;height:11px;overflow:hidden;top:391.40px;font-size:7.3px;color:#444">BPP</div>
<div class="t" style="left:985.5px;top:391.40px;font-size:7.3px;color:#444">1.598</div>
<div class="t" style="left:1034px;top:391.40px;font-size:7.3px;color:#444">mm mrad</div>
<div class="a" style="left:892px;top:402.20px;width:284px;height:15.8px;background:#e3e3e3"></div>
<div class="t" style="left:911.5px;width:68px;height:11px;overflow:hidden;top:407.10px;font-size:7.3px;color:#444">K<span style="color:#5aa5e6;margin-left:5px">ISO</span></div>
<div class="t" style="left:985.5px;top:407.10px;font-size:7.3px;color:#444">0.860</div>
<div class="t" style="left:1034px;top:407.10px;font-size:7.3px;color:#444"></div>
<div class="a" style="left:982px;top:292.3px;width:1px;height:125.6px;background:#dadada"></div>
<div class="a" style="left:1031px;top:292.3px;width:1px;height:125.6px;background:#dadada"></div>
<div class="a" style="left:1079px;top:292.3px;width:1px;height:125.6px;background:#dadada"></div>
<div class="a" style="left:892px;top:418px;width:284px;height:1px;background:#e6e6e6"></div>
</body></html>
